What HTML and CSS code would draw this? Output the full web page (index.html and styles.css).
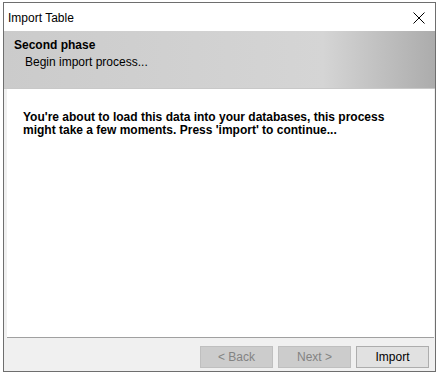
FILE: index.html
```html
<!DOCTYPE html>
<html lang="en">
  <head>
    <meta charset="UTF-8" />
    <title>Import Table</title>
    <link rel="stylesheet" href="styles.css">
  </head>
  <body>
    <div class="window">
      <div class="titlebar">
        <span class="title">Import Table</span>
        <svg class="close" width="12" height="12" viewBox="0 0 12 12">
          <path d="M0.5 0.5 L11.5 11.5 M11.5 0.5 L0.5 11.5" stroke="#000" stroke-width="1" fill="none" />
        </svg>
      </div>
      <div class="header">
        <div class="phase">Second phase</div>
        <div class="phase-sub">Begin import process...</div>
      </div>
      <div class="content">
        <p class="message">You're about to load this data into your databases, this process might take a few moments. Press 'import' to continue...</p>
      </div>
      <div class="footer">
        <button class="btn" disabled>&lt; Back</button>
        <button class="btn" disabled>Next &gt;</button>
        <button class="btn primary">Import</button>
      </div>
    </div>
  </body>
</html>
```

FILE: styles.css
```css
* {
  box-sizing: border-box;
  margin: 0;
  padding: 0;
}

body {
  background: #ffffff;
  font-family: "Liberation Sans", Arial, sans-serif;
  font-size: 12px;
  color: #000;
}

.window {
  margin: 2px 0 0 3px;
  width: 433px;
  height: 370px;
  border: 1px solid #6e6e6e;
  display: flex;
  flex-direction: column;
  background: #f0f0f0;
}

.titlebar {
  height: 28px;
  background: #fff;
  display: flex;
  align-items: center;
  justify-content: space-between;
  padding: 2px 10px 0 4px;
}

.title {
  font-size: 12px;
  color: #000;
}

.header {
  height: 58px;
  padding: 7px 10px;
  background: linear-gradient(to right, #cbcbcb 0%, #d5d5d5 74%, #acacac 100%);
  border-bottom: 1px solid #c8c8c8;
}

.phase {
  font-weight: bold;
  font-size: 12px;
  line-height: 14px;
}

.phase-sub {
  font-size: 12px;
  line-height: 14px;
  margin-top: 3px;
  padding-left: 11px;
}

.content {
  flex: 1;
  background: #fff;
  margin: 0 1px 0 3px;
  padding: 22px 16px;
  border-bottom: 1px solid #a0a0a0;
}

.message {
  max-width: 372px;
  font-weight: bold;
  font-size: 12px;
  line-height: 13px;
}

.footer {
  height: 33px;
  display: flex;
  justify-content: flex-end;
  align-items: flex-end;
  gap: 5px;
  padding: 0 6px 3px 0;
}

.btn {
  width: 73px;
  height: 22px;
  font-family: "Liberation Sans", Arial, sans-serif;
  font-size: 12px;
  background: #e1e1e1;
  border: 1px solid #adadad;
  color: #000;
}

.btn:disabled {
  background: #cccccc;
  border-color: #bfbfbf;
  color: #838383;
}
```
